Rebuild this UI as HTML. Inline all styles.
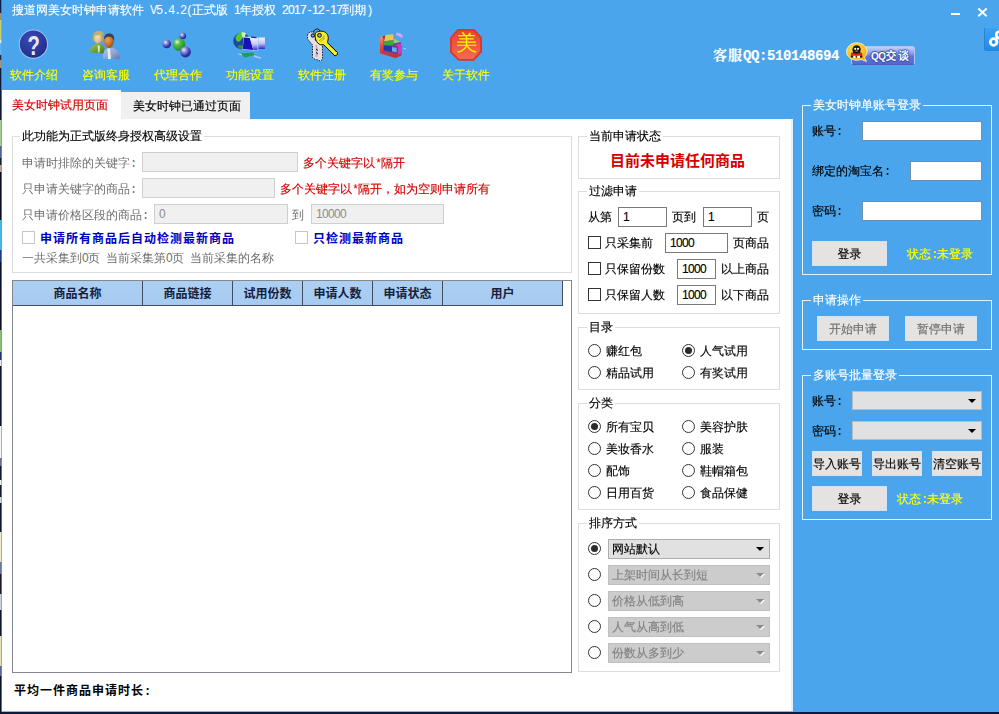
<!DOCTYPE html>
<html lang="zh-CN">
<head>
<meta charset="utf-8">
<title>搜道网美女时钟申请软件</title>
<style>
*{box-sizing:border-box;margin:0;padding:0}
html,body{width:999px;height:714px;overflow:hidden;background:#4aa5ec}
body{position:relative;-webkit-text-stroke:0.15px currentColor;font:12px/14px "Liberation Sans","WenQuanYi Zen Hei","Noto Sans CJK SC",sans-serif;color:#000}
.a{position:absolute;white-space:nowrap}
.b{font-weight:bold;-webkit-text-stroke:0;font-family:"Liberation Sans","Noto Sans CJK SC","WenQuanYi Zen Hei",sans-serif}
.m{font-family:"Liberation Mono",monospace;font-size:12px;letter-spacing:-1.2px;-webkit-text-stroke:0}
.ls{letter-spacing:1px}
.d{font-family:"Liberation Sans",sans-serif;font-size:12px;letter-spacing:-0.67px}
.w{color:#fff}
.y{color:#ffff00}
.r{color:#d40000}
.g{color:#6d6d6d;-webkit-text-stroke:0}
.gb{border:1px solid #dcdcdc}
.gbw{border:1px solid #e6f1fb}
.lg{background:#fff;padding:0 2px;height:14px}
.lgb{background:#4aa5ec;padding:0 2px;height:14px;color:#fff}
.in{background:#fff;border:1px solid #7a7a7a;height:20px;padding:2px 0 0 4px;line-height:14px;font-family:"Liberation Sans",sans-serif;font-size:12px;letter-spacing:-0.67px}
.ind{background:#f0f0f0;border:1px solid #cfcfcf;height:20px;padding:2px 0 0 4px;color:#8c8c8c;-webkit-text-stroke:0;line-height:14px;font-family:"Liberation Sans",sans-serif;font-size:12px;letter-spacing:-0.67px}
.inw{background:#fff;border:1px solid #6f8fae;height:20px}
.cb{width:13px;height:13px;border:1px solid #333;background:#fff}
.cbd{width:13px;height:13px;border:1px solid #c6c6c6;background:#fff}
.rd{width:13px;height:13px;border:1px solid #333;border-radius:50%;background:#fff}
.rd.on::after{content:"";position:absolute;left:2px;top:2px;width:7px;height:7px;border-radius:50%;background:#2b2b2b}
.btn{background:#e5e3e1;border:1px solid #d3e3f6;text-align:center;line-height:25px}
.btnd{background:#e5e3e1;border:1px solid #d3e3f6;text-align:center;line-height:25px;color:#6f6f6f}
.sel{background:#e1e1e1;border:1px solid #adadad;height:20px;padding:2px 0 0 3px;line-height:14px}
.seld{background:#cccccc;border:1px solid #bfbfbf;height:20px;padding:2px 0 0 3px;line-height:14px;color:#838383}
.arr{position:absolute;right:5px;top:7px;width:0;height:0;border-left:4px solid transparent;border-right:4px solid transparent;border-top:4px solid #000}
.seld .arr{border-top-color:#8a8a8a;filter:drop-shadow(1px 1px 0 #fff)}
.th{top:281px;height:25px;background:linear-gradient(#adcff4,#a6caf0);border-right:1px solid #3f4d60;border-bottom:1px solid #3f4d60;text-align:center;line-height:26px;font-size:12px;color:#14213d}
.tl{top:68px;width:72px;text-align:center;color:#ffff00}
</style>
</head>
<body>
<!-- title bar -->
<div class="a w" style="left:12px;top:3px">搜道网美女时钟申请软件<span class="m"> V5.4.2(</span>正式版<span class="m"> </span><span class="d">1</span>年授权<span class="m"> </span><span class="d">2017</span><span class="m">-</span><span class="d">12</span><span class="m">-</span><span class="d">17</span>到期<span class="m">)</span></div>
<!-- toolbar -->
<!-- toolbar icons -->
<svg class="a" style="left:10px;top:22px" width="50" height="44" viewBox="0 0 50 44">
<defs><radialGradient id="g1" cx="0.4" cy="0.3" r="0.8"><stop offset="0" stop-color="#3d47b6"/><stop offset="0.55" stop-color="#2a3a9c"/><stop offset="1" stop-color="#1b2b7c"/></radialGradient>
<linearGradient id="gq" x1="0" y1="0" x2="0" y2="1"><stop offset="0" stop-color="#ffffff"/><stop offset="1" stop-color="#cfcbe0"/></linearGradient></defs>
<circle cx="23.4" cy="22.2" r="14.600" fill="#9cc4f2"/>
<circle cx="23.4" cy="22.2" r="13.600" fill="url(#g1)"/>
<text x="0" y="7.900" text-anchor="middle" font-family="Liberation Sans, sans-serif" font-weight="bold" font-size="22" fill="#ebe8f4" transform="translate(23.600 22.800) scale(0.92 1.26)">?</text>
</svg>
<svg class="a" style="left:80px;top:22px" width="50" height="44" viewBox="0 0 50 44">
<defs>
<linearGradient id="u1" x1="0" y1="0" x2="1" y2="1"><stop offset="0" stop-color="#9cc450"/><stop offset="0.6" stop-color="#6a9a30"/><stop offset="1" stop-color="#3f7a2a"/></linearGradient>
<radialGradient id="u2" cx="0.45" cy="0.4" r="0.7"><stop offset="0" stop-color="#f6dcb4"/><stop offset="0.7" stop-color="#e0b88c"/><stop offset="1" stop-color="#b88a5c"/></radialGradient>
<radialGradient id="u3" cx="0.35" cy="0.35" r="0.8"><stop offset="0" stop-color="#f2a04a"/><stop offset="0.5" stop-color="#c87832"/><stop offset="1" stop-color="#7a4420"/></radialGradient>
<linearGradient id="u4" x1="0" y1="0" x2="1" y2="1"><stop offset="0" stop-color="#b4c6e4"/><stop offset="0.6" stop-color="#8aa2cc"/><stop offset="1" stop-color="#5878b0"/></linearGradient>
</defs>
<path d="M10 30.500C10 25 13 22.500 17 22l3.500 0c2.500.500 4 2 4 5l0 4.500z" fill="url(#u1)"/>
<path d="M17.500 23.500l2.500 0l-.500 7l-1.500 0z" fill="#d4e6b8"/>
<path d="M12.600 19C11.500 11.500 14.500 8.500 18.500 8.700c3.500.2 5.500 2 5.300 5.500l-.8 5.800z" fill="#a8a468"/>
<ellipse cx="17.800" cy="16.200" rx="4" ry="5.500" fill="url(#u2)"/>
<path d="M13.300 13.500c1-3 3-4.500 5.500-4.500c2.500 0 4.500 1 5 3l-6 1c-2 .300-3.500.500-4.500 2z" fill="#b8b474"/>
<path d="M23 37C22.500 30 25 26.500 29 26l3 0c4.500.500 7.500 4 7.500 11z" fill="url(#u4)"/>
<path d="M27.500 26.500l2.500 0l1 10.500l-3 0z" fill="#e4ecf8"/>
<ellipse cx="28.900" cy="19.500" rx="4.800" ry="6.500" fill="url(#u3)"/>
<path d="M24.100 17.500c-.2-4.300 2-6 5.200-6c3.700 0 5.500 2.500 4.800 8c-.8-3-2.300-4.800-4.500-4.800c-2.500 0-4.200.500-5.500 2.800z" fill="#3a4254"/>
</svg>
<svg class="a" style="left:152px;top:22px" width="50" height="44" viewBox="0 0 50 44">
<defs>
<radialGradient id="gb" cx="0.35" cy="0.3" r="0.8"><stop offset="0" stop-color="#e8ecff"/><stop offset="0.3" stop-color="#8a8ee0"/><stop offset="0.7" stop-color="#2c30a4"/><stop offset="1" stop-color="#1a2a90"/></radialGradient>
<radialGradient id="gg" cx="0.35" cy="0.3" r="0.8"><stop offset="0" stop-color="#e0ffd8"/><stop offset="0.3" stop-color="#5cc048"/><stop offset="0.75" stop-color="#289a2c"/><stop offset="1" stop-color="#1c7a38"/></radialGradient>
</defs>
<circle cx="30.800" cy="14" r="3.300" fill="url(#gb)"/>
<circle cx="14.800" cy="22" r="4.300" fill="url(#gb)"/>
<circle cx="27" cy="22.500" r="6.300" fill="url(#gg)"/>
<circle cx="33.500" cy="30" r="5.400" fill="url(#gb)"/>
</svg>
<svg class="a" style="left:224px;top:22px" width="50" height="44" viewBox="0 0 50 44">
<defs><linearGradient id="gm" x1="0" y1="0" x2="0" y2="1"><stop offset="0" stop-color="#f2f0ff"/><stop offset="0.5" stop-color="#c8c4f8"/><stop offset="1" stop-color="#2a2ac8"/></linearGradient>
<linearGradient id="gl" x1="0" y1="0" x2="1" y2="1"><stop offset="0" stop-color="#8fe04a"/><stop offset="0.5" stop-color="#37a83a"/><stop offset="1" stop-color="#1a4aa8"/></linearGradient></defs>
<circle cx="17.500" cy="19" r="8.300" fill="#1d49a6"/>
<path d="M11.500 15c1.500-3 4.500-5 8-5.200l1 3.500c-2 2-3 5.500-5.500 6.500c-2 .5-3.500-2-3.500-4.800z" fill="#58c634"/>
<path d="M17.500 10.200c2-.2 3.500.2 4.500 1l-1.500 4.500l-2.500-1z" fill="#c8f2c0"/>
<path d="M13.500 24c1.500-1 3.500-1 5 0l0 3c-2 .2-4-1-5-3z" fill="#2f9c2c"/>
<path d="M34.500 15.500l6.500 0l0 11.500l-6.500 0z" fill="url(#gm)"/>
<path d="M19.500 14.500l15 1l-0.500 13.500l-15.500-1.500z" fill="#e2e0fa"/>
<path d="M19.800 15.500l6 .4l3.500 12l-10.500-1z" fill="#1414b8"/>
<path d="M26 16l8 .5l-0.500 12l-4-0.500z" fill="url(#gm)"/>
<path d="M27 14.500l5.500.5l0 1.200l-5.500-0.400z" fill="#18308a"/>
<path d="M17 31.500l12-1l1.500 2.500l-10 2.500z" fill="#1fa04a"/>
<path d="M13 31l5 1.500l-1 1z" fill="#b8d8f0"/>
<path d="M30 33l7 2.500l0 1.500l-7-2z" fill="#a8c8ee"/>
</svg>
<svg class="a" style="left:296px;top:22px" width="50" height="44" viewBox="0 0 50 44">
<path d="M11.500 13.500c0-2.500 2.500-4 5.500-3.500l3 2.500l-1 5.500l7.500 5l0 14.500l-2.500 1.500l-3-1.500l-1 .5l-3.500-2.500l0-12.500l-5-6z" fill="#e4dde6" stroke="#111" stroke-width="0.900" stroke-dasharray="1.500 1.200"/>
<path d="M20.500 23l0 12" stroke="#b9aab6" stroke-width="1.500"/>
<path d="M20 27l2 1.500M20 30.500l2 1.500" stroke="#111" stroke-width="1"/>
<path d="M17.500 10.500c0-4 6-4.500 6.500-1.500" fill="none" stroke="#111" stroke-width="1"/>
<circle cx="16.800" cy="13.500" r="1.700" fill="#4aa5ec" stroke="#111" stroke-width="1"/>
<path d="M19 13c0-3 4-4.500 8.500-3.500c3.500 1 5.500 4.500 4.500 8.500l-0.500 2.500l10 10l0 2l-2.500 1.500l-11.500-11.500c-3.500 1.500-8.500-2-8.500-9.500z" fill="#f6ee28" stroke="#111" stroke-width="1"/>
<path d="M32 21.500l9 9" stroke="#111" stroke-width="0.800" stroke-dasharray="1 0.800"/>
<circle cx="23.500" cy="13.300" r="1.900" fill="#9aa0c8" stroke="#111" stroke-width="1"/>
<path d="M23.500 18.500l5-4.500M24.800 19.500l4-3.500" stroke="#111" stroke-width="0.700" stroke-dasharray="0.800 0.700"/>
</svg>
<svg class="a" style="left:368px;top:22px" width="50" height="44" viewBox="0 0 50 44">
<defs><linearGradient id="gr" x1="0" y1="0" x2="0" y2="1"><stop offset="0" stop-color="#f4907c"/><stop offset="0.5" stop-color="#e0483a"/><stop offset="1" stop-color="#c42c26"/></linearGradient></defs>
<path d="M28.400 10.500l4.600 1.300l2.200 2.600l-1.600 1.400l-5.400-2.800z" fill="#e4a0f2"/>
<path d="M12 15l4-1l0 15.500l11.500 2.500l6-1.500l0 3l-6 2.500l-15.500-4.800z" fill="url(#gr)"/>
<path d="M15.500 18l10 -1l7.500 3.500l0 10.500l-5.500 1.200l-12-2.700z" fill="#7a3a8a"/>
<path d="M14.500 14.300l4-.8l0 4.500l-2.500.5z" fill="#a82820"/>
<path d="M17.500 13l7.800-.8l0 6l-9.300 1z" fill="#ecc850"/>
<path d="M25.300 16.200l7.400 3.800l-7.400 1.500z" fill="#8fd470"/>
<path d="M15.800 19.200l9.500-1l0 5.300l-9.500-.5z" fill="#34ac3c"/>
<path d="M15.800 23.800l8.200.500l0 5.400l-8.200-1.600z" fill="#2434b8"/>
<path d="M24 25.300l4.600.500l0 4.500l-4.600-1z" fill="#52b8ee"/>
<path d="M26.800 22.800l5.700-1l1.500 2l0 7.500l-4 1l0-7.500z" fill="#c83cc8"/>
<path d="M35 26.500l2.500-.500l0 1.500z" fill="#bfe4fa"/>
</svg>
<svg class="a" style="left:440px;top:22px" width="50" height="44" viewBox="0 0 50 44">
<defs><linearGradient id="go" x1="0" y1="0" x2="0" y2="1"><stop offset="0" stop-color="#e8442e"/><stop offset="0.6" stop-color="#f05a44"/><stop offset="1" stop-color="#f26a50"/></linearGradient></defs>
<path d="M17.500 7L34.500 7L42 15.500L42 30L34 38.800L18.500 38.800L10 30.500L10 15.500z" fill="#dc3626"/>
<path d="M18.300 8.800L33.700 8.800L40.200 16.200L40.200 29.300L33.200 37L19.300 37L11.800 29.800L11.800 16.200z" fill="url(#go)"/>
<text x="26.700" y="27.800" text-anchor="middle" font-family="Liberation Sans, WenQuanYi Zen Hei, Noto Sans CJK SC, sans-serif" font-size="21.5" fill="#fff200">美</text>
</svg>

<div class="a tl" style="left:-2px">软件介绍</div>
<div class="a tl" style="left:70px">咨询客服</div>
<div class="a tl" style="left:142px">代理合作</div>
<div class="a tl" style="left:214px">功能设置</div>
<div class="a tl" style="left:286px">软件注册</div>
<div class="a tl" style="left:358px">有奖参与</div>
<div class="a tl" style="left:430px">关于软件</div>
<!-- main white panel -->
<div class="a" style="left:2px;top:119px;width:789px;height:592px;background:#fff"></div>
<div class="a" style="left:791px;top:119px;width:2px;height:592px;background:#e3f1fc"></div>
<!-- tabs -->
<div class="a r" style="left:2px;top:90px;width:119px;height:29px;background:#fff;padding:8px 0 0 10px">美女时钟试用页面</div>
<div class="a" style="left:121px;top:92px;width:129px;height:27px;background:#f0f0f0;padding:7px 0 0 12px">美女时钟已通过页面</div>
<!-- bottom strip -->
<div class="a" style="left:2px;top:711px;width:791px;height:1px;background:#a9afc0"></div>
<div class="a" style="left:0;top:712px;width:999px;height:2px;background:#0b1a40"></div>
<div class="a" style="left:0;top:0;width:1px;height:714px;background:linear-gradient(to bottom,#10204a 0px,#10204a 13px,#a09070 13px,#a09070 20px,#c8d070 20px,#c8d070 40px,#e8e8e8 40px,#e8e8e8 43px,#60b0f0 43px,#60b0f0 55px,#202840 55px,#202840 60px,#a89078 60px,#a89078 68px,#0c1838 68px,#0c1838 120px,#a0d090 120px,#a0d090 146px,#5060a0 146px,#5060a0 158px,#181c30 158px,#181c30 165px,#c0a090 165px,#c0a090 172px,#080c20 172px,#080c20 220px,#40b8e8 220px,#40b8e8 250px,#203880 250px,#203880 262px,#0a1028 262px,#0a1028 330px,#80c070 330px,#80c070 352px,#203070 352px,#203070 360px,#e8e8f0 360px,#e8e8f0 366px,#0c1430 366px,#0c1430 426px,#f4f4f4 426px,#f4f4f4 458px,#6070a0 458px,#6070a0 466px,#101830 466px,#101830 480px,#f0f0f0 480px,#f0f0f0 485px,#101830 485px,#101830 497px,#d0d8e0 497px,#d0d8e0 503px,#0c1430 503px,#0c1430 532px,#f0e8c8 532px,#f0e8c8 562px,#6878a8 562px,#6878a8 574px,#201820 574px,#201820 594px,#c8d0e0 594px,#c8d0e0 610px,#101428 610px,#101428 636px,#e8e0b8 636px,#e8e0b8 666px,#5868a0 666px,#5868a0 676px,#0a1228 676px,#0a1228 714px)"></div>
<div class="a" style="left:1px;top:0;width:1px;height:714px;opacity:.3;background:linear-gradient(to bottom,#10204a 0px,#10204a 13px,#a09070 13px,#a09070 20px,#c8d070 20px,#c8d070 40px,#e8e8e8 40px,#e8e8e8 43px,#60b0f0 43px,#60b0f0 55px,#202840 55px,#202840 60px,#a89078 60px,#a89078 68px,#0c1838 68px,#0c1838 120px,#a0d090 120px,#a0d090 146px,#5060a0 146px,#5060a0 158px,#181c30 158px,#181c30 165px,#c0a090 165px,#c0a090 172px,#080c20 172px,#080c20 220px,#40b8e8 220px,#40b8e8 250px,#203880 250px,#203880 262px,#0a1028 262px,#0a1028 330px,#80c070 330px,#80c070 352px,#203070 352px,#203070 360px,#e8e8f0 360px,#e8e8f0 366px,#0c1430 366px,#0c1430 426px,#f4f4f4 426px,#f4f4f4 458px,#6070a0 458px,#6070a0 466px,#101830 466px,#101830 480px,#f0f0f0 480px,#f0f0f0 485px,#101830 485px,#101830 497px,#d0d8e0 497px,#d0d8e0 503px,#0c1430 503px,#0c1430 532px,#f0e8c8 532px,#f0e8c8 562px,#6878a8 562px,#6878a8 574px,#201820 574px,#201820 594px,#c8d0e0 594px,#c8d0e0 610px,#101428 610px,#101428 636px,#e8e0b8 636px,#e8e0b8 666px,#5868a0 666px,#5868a0 676px,#0a1228 676px,#0a1228 714px)"></div>
<!-- main: settings group -->
<div class="a gb" style="left:12px;top:136px;width:560px;height:137px"></div>
<div class="a lg" style="left:20px;top:129px">此功能为正式版终身授权高级设置</div>
<div class="a g" style="left:22px;top:156px">申请时排除的关键字<span class="m">:</span></div>
<div class="a ind" style="left:142px;top:152px;width:156px"></div>
<div class="a r" style="left:303px;top:156px">多个关键字以<span class="m">*</span>隔开</div>
<div class="a g" style="left:22px;top:182px">只申请关键字的商品<span class="m">:</span></div>
<div class="a ind" style="left:142px;top:178px;width:133px"></div>
<div class="a r" style="left:280px;top:182px">多个关键字以<span class="m">*</span>隔开，如为空则申请所有</div>
<div class="a g" style="left:22px;top:208px">只申请价格区段的商品<span class="m">:</span></div>
<div class="a ind" style="left:154px;top:204px;width:134px">0</div>
<div class="a g" style="left:292px;top:208px">到</div>
<div class="a ind" style="left:311px;top:204px;width:133px">10000</div>
<div class="a cbd" style="left:22px;top:231px"></div>
<div class="a b ls" style="left:40px;top:232px;color:#0000c0">申请所有商品后自动检测最新商品</div>
<div class="a cbd" style="left:295px;top:231px"></div>
<div class="a b ls" style="left:313px;top:232px;color:#0000c0">只检测最新商品</div>
<div class="a g" style="left:22px;top:251px">一共采集到<span class="d">0</span>页<span class="m"> </span>当前采集第<span class="d">0</span>页<span class="m"> </span>当前采集的名称</div>
<!-- table -->
<div class="a" style="left:12px;top:280px;width:560px;height:393px;border:1px solid #828790;background:#fff"></div>
<div class="a th b" style="left:13px;width:130px">商品名称</div>
<div class="a th b" style="left:143px;width:90px">商品链接</div>
<div class="a th b" style="left:233px;width:70px">试用份数</div>
<div class="a th b" style="left:303px;width:70px">申请人数</div>
<div class="a th b" style="left:373px;width:70px">申请状态</div>
<div class="a th b" style="left:443px;width:120px">用户</div>
<div class="a b ls" style="left:14px;top:684px">平均一件商品申请时长<span class="m">:</span></div>

<!-- mid column -->
<div class="a gb" style="left:578px;top:136px;width:202px;height:43px"></div>
<div class="a lg" style="left:587px;top:129px">当前申请状态</div>
<div class="a b r" style="left:577px;top:152px;width:201px;text-align:center;font-size:15px;line-height:18px">目前未申请任何商品</div>
<div class="a gb" style="left:578px;top:191px;width:202px;height:123px"></div>
<div class="a lg" style="left:587px;top:184px">过滤申请</div>
<div class="a" style="left:588px;top:210px">从第</div>
<div class="a in" style="left:618px;top:207px;width:49px">1</div>
<div class="a" style="left:672px;top:210px">页到</div>
<div class="a in" style="left:703px;top:207px;width:49px">1</div>
<div class="a" style="left:757px;top:210px">页</div>
<div class="a cb" style="left:588px;top:236px"></div>
<div class="a" style="left:605px;top:236px">只采集前</div>
<div class="a in" style="left:665px;top:233px;width:63px">1000</div>
<div class="a" style="left:733px;top:236px">页商品</div>
<div class="a cb" style="left:588px;top:262px"></div>
<div class="a" style="left:605px;top:262px">只保留份数</div>
<div class="a in" style="left:677px;top:259px;width:39px">1000</div>
<div class="a" style="left:721px;top:262px">以上商品</div>
<div class="a cb" style="left:588px;top:288px"></div>
<div class="a" style="left:605px;top:288px">只保留人数</div>
<div class="a in" style="left:677px;top:285px;width:39px">1000</div>
<div class="a" style="left:721px;top:288px">以下商品</div>
<div class="a gb" style="left:578px;top:327px;width:202px;height:63px"></div>
<div class="a lg" style="left:587px;top:320px">目录</div>
<div class="a rd" style="left:588px;top:344px"></div><div class="a" style="left:606px;top:344px">赚红包</div>
<div class="a rd on" style="left:682px;top:344px"></div><div class="a" style="left:700px;top:344px">人气试用</div>
<div class="a rd" style="left:588px;top:366px"></div><div class="a" style="left:606px;top:366px">精品试用</div>
<div class="a rd" style="left:682px;top:366px"></div><div class="a" style="left:700px;top:366px">有奖试用</div>
<div class="a gb" style="left:578px;top:403px;width:202px;height:107px"></div>
<div class="a lg" style="left:587px;top:396px">分类</div>
<div class="a rd on" style="left:588px;top:420px"></div><div class="a" style="left:606px;top:420px">所有宝贝</div>
<div class="a rd" style="left:682px;top:420px"></div><div class="a" style="left:700px;top:420px">美容护肤</div>
<div class="a rd" style="left:588px;top:442px"></div><div class="a" style="left:606px;top:442px">美妆香水</div>
<div class="a rd" style="left:682px;top:442px"></div><div class="a" style="left:700px;top:442px">服装</div>
<div class="a rd" style="left:588px;top:464px"></div><div class="a" style="left:606px;top:464px">配饰</div>
<div class="a rd" style="left:682px;top:464px"></div><div class="a" style="left:700px;top:464px">鞋帽箱包</div>
<div class="a rd" style="left:588px;top:486px"></div><div class="a" style="left:606px;top:486px">日用百货</div>
<div class="a rd" style="left:682px;top:486px"></div><div class="a" style="left:700px;top:486px">食品保健</div>
<div class="a gb" style="left:578px;top:523px;width:202px;height:149px"></div>
<div class="a lg" style="left:587px;top:516px">排序方式</div>
<div class="a rd on" style="left:588px;top:542px"></div><div class="a sel" style="left:608px;top:539px;width:162px">网站默认<i class="arr"></i></div>
<div class="a rd" style="left:588px;top:568px"></div><div class="a seld" style="left:608px;top:565px;width:162px">上架时间从长到短<i class="arr"></i></div>
<div class="a rd" style="left:588px;top:594px"></div><div class="a seld" style="left:608px;top:591px;width:162px">价格从低到高<i class="arr"></i></div>
<div class="a rd" style="left:588px;top:620px"></div><div class="a seld" style="left:608px;top:617px;width:162px">人气从高到低<i class="arr"></i></div>
<div class="a rd" style="left:588px;top:646px"></div><div class="a seld" style="left:608px;top:643px;width:162px">份数从多到少<i class="arr"></i></div>

<!-- right panel -->
<div class="a w" style="left:713px;top:47px;font:bold 14px/18px 'Liberation Serif','Noto Serif CJK SC',serif;letter-spacing:1px">客服<span style="font-family:'Liberation Mono',monospace;font-size:14px;letter-spacing:-0.4px">QQ:510148694</span></div>
<div class="a" style="left:851px;top:46px;width:64px;height:19px;border-radius:3px;border:1px solid #b4c6f6;border-bottom-color:#4a5cb8;background:linear-gradient(#c4d2fa,#8ea2ec 35%,#6078dc 55%,#5068d2)"></div>
<div class="a b w" style="left:871px;top:49px;font-size:11px;line-height:14px;letter-spacing:1.5px;text-shadow:0 1px 1px #3c4aa4,0 -1px 1px #3c4aa4,1px 0 1px #3c4aa4,-1px 0 1px #3c4aa4"><span style="font-size:10px;letter-spacing:-0.5px">QQ</span>交谈</div>
<svg class="a" style="left:844px;top:40px" width="26" height="24" viewBox="0 0 26 24">
<defs><radialGradient id="qb" cx="0.4" cy="0.35" r="0.8"><stop offset="0" stop-color="#ffe24a"/><stop offset="0.6" stop-color="#f8c020"/><stop offset="1" stop-color="#e89818"/></radialGradient></defs>
<path d="M12.800 2.800c5.600 0 10.200 3.800 10.200 8.600c0 2.400-1 4.400-2.600 6l2 4l-5.200-2c-1.400.5-2.800.8-4.400.8c-5.600 0-10.200-3.800-10.200-8.600c0-4.800 4.600-8.800 10.200-8.800z" fill="url(#qb)" stroke="#fff4c8" stroke-width="0.900"/>
<ellipse cx="12.600" cy="9.600" rx="4.200" ry="4.400" fill="#161616"/>
<path d="M6.800 17.500c0-4 2.500-6.500 5.800-6.500c3.300 0 5.800 2.500 5.800 6.500z" fill="#161616"/>
<path d="M7.200 12.600c3.400 1.400 7.400 1.400 10.800 0l.6 2.600c-3.800 1.600-8.200 1.600-12 0z" fill="#e82418"/>
<path d="M9.200 15.800l2.400 0l0 2.200l-2.400 0zM13.200 15.800l2.800 0l0 2.200l-2.800 0z" fill="#fff"/>
<circle cx="11.200" cy="8.800" r="1.100" fill="#fff"/><circle cx="14" cy="8.800" r="1.100" fill="#fff"/>
<ellipse cx="12.600" cy="11" rx="1.600" ry="0.600" fill="#f6a01c"/>
</svg>
<div class="a" style="left:984px;top:27px;width:20px;height:24px;border-radius:2px;background:linear-gradient(#3ba2f2,#1e8ce8);border:1px solid #2a82d4;border-top-color:#4aa8f2"></div>
<svg class="a" style="left:984px;top:27px" width="15" height="24" viewBox="0 0 15 24"><circle cx="9.600" cy="15" r="3.300" fill="none" stroke="#fff" stroke-width="2.800"/><circle cx="15.600" cy="7.800" r="3.300" fill="none" stroke="#fff" stroke-width="2.800"/><path d="M11.500 12.800l2.500-3" stroke="#fff" stroke-width="2.800"/></svg>
<div class="a gbw" style="left:802px;top:105px;width:190px;height:170px"></div>
<div class="a lgb" style="left:811px;top:98px">美女时钟单账号登录</div>
<div class="a" style="left:812px;top:124px">账号<span class="m">:</span></div>
<div class="a inw" style="left:862px;top:121px;width:120px"></div>
<div class="a" style="left:812px;top:164px">绑定的淘宝名<span class="m">:</span></div>
<div class="a inw" style="left:910px;top:161px;width:72px"></div>
<div class="a" style="left:812px;top:204px">密码<span class="m">:</span></div>
<div class="a inw" style="left:862px;top:201px;width:120px"></div>
<div class="a btn" style="left:812px;top:241px;width:75px;height:25px">登录</div>
<div class="a y" style="left:907px;top:247px">状态<span class="m">:</span>未登录</div>
<div class="a gbw" style="left:802px;top:300px;width:190px;height:50px"></div>
<div class="a lgb" style="left:811px;top:293px">申请操作</div>
<div class="a btnd" style="left:817px;top:316px;width:72px;height:25px">开始申请</div>
<div class="a btnd" style="left:905px;top:316px;width:72px;height:25px">暂停申请</div>
<div class="a gbw" style="left:802px;top:375px;width:190px;height:145px"></div>
<div class="a lgb" style="left:811px;top:368px">多账号批量登录</div>
<div class="a" style="left:812px;top:394px">账号<span class="m">:</span></div>
<div class="a sel" style="left:852px;top:391px;width:130px;height:19px;border-color:#b9bdc2"><i class="arr"></i></div>
<div class="a" style="left:812px;top:424px">密码<span class="m">:</span></div>
<div class="a sel" style="left:852px;top:421px;width:130px;height:19px;border-color:#b9bdc2"><i class="arr"></i></div>
<div class="a btn" style="left:812px;top:451px;width:50px;height:25px">导入账号</div>
<div class="a btn" style="left:872px;top:451px;width:50px;height:25px">导出账号</div>
<div class="a btn" style="left:932px;top:451px;width:50px;height:25px">清空账号</div>
<div class="a btn" style="left:812px;top:486px;width:75px;height:25px">登录</div>
<div class="a y" style="left:897px;top:492px">状态<span class="m">:</span>未登录</div>
<!-- window controls -->
<div class="a" style="left:951px;top:13px;width:9px;height:2px;background:#fff"></div>
<svg class="a" style="left:976px;top:6px" width="13" height="13" viewBox="0 0 13 13"><path d="M2.300 2.500L10.700 10.300M10.700 2.500L2.300 10.300" stroke="#fff" stroke-width="1.900" fill="none"/></svg>

</body>
</html>
